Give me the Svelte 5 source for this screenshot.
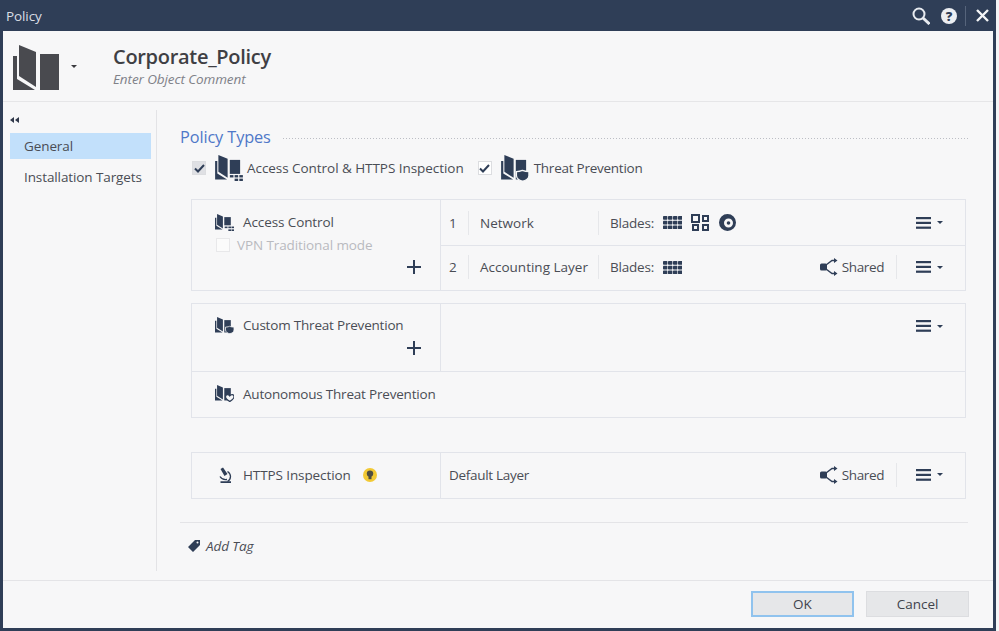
<script>
  const tiles = [0, 1, 2].flatMap((r) => [0, 1, 2, 3].map((c) => ({ x: c * 5, y: r * 4.7 })));
</script>

{#snippet book()}
  <path d="M6 0 23 7V42L6 31Z" />
  <path d="M0 11H4V34L22 45H0Z" />
  <path d="M27 9H46V45H27Z" />
{/snippet}

{#snippet blades()}
  <svg class="ic" width="19" height="13" viewBox="0 0 19 13" aria-hidden="true">
    {#each tiles as t}<rect x={t.x} y={t.y} width="4.400" height="3.700" rx="0.700" />{/each}
  </svg>
{/snippet}

{#snippet share()}
  <svg class="ic" width="18" height="18" viewBox="0 0 18 18" aria-hidden="true">
    <rect x="0" y="5.500" width="7" height="7" rx="1.500" />
    <path class="ln" d="M6 7 12 2.500H15M6 11 12 15.500H15" />
    <path d="M14 0 17.500 2.500 14 5ZM14 13 17.500 15.500 14 18Z" />
  </svg>
{/snippet}

{#snippet menu()}
  <div class="menu">
    <svg class="ic" width="15" height="12" viewBox="0 0 15 12" aria-hidden="true">
      <rect width="15" height="2.200" /><rect y="4.800" width="15" height="2.200" /><rect y="9.600" width="15" height="2.200" />
    </svg>
    <span class="caret"></span>
  </div>
{/snippet}

{#snippet plus()}
  <svg class="ic" width="14" height="14" viewBox="0 0 14 14" aria-hidden="true">
    <rect y="6" width="14" height="2" /><rect x="6" width="2" height="14" />
  </svg>
{/snippet}

<div class="window">
  <header class="title">
    <span class="title-text">Policy</span>
    <div class="title-tools">
      <svg width="18" height="18" viewBox="0 0 18 18" aria-hidden="true">
        <circle cx="7" cy="7" r="5.500" fill="none" stroke="#e8ebf0" stroke-width="2" />
        <path d="M11 11 17.500 17" stroke="#e8ebf0" stroke-width="3" />
      </svg>
      <span class="help">?</span>
      <span class="tool-sep"></span>
      <svg width="13" height="13" viewBox="0 0 13 13" aria-hidden="true">
        <path d="M1 1 12 12M12 1 1 12" stroke="#f4f5f7" stroke-width="2.400" />
      </svg>
    </div>
  </header>

  <div class="object">
    <svg class="big-book" width="47" height="45" viewBox="0 0 47 45" aria-hidden="true">{@render book()}</svg>
    <span class="caret big-caret"></span>
    <div class="object-text">
      <h1>Corporate_Policy</h1>
      <p>Enter Object Comment</p>
    </div>
  </div>

  <div class="body">
    <nav class="side">
      <div class="collapse">
        <svg width="9" height="6" viewBox="0 0 9 6" aria-hidden="true"><path d="M4 0V6L0 3ZM9 0V6L5 3Z" /></svg>
      </div>
      <div class="nav-item active">General</div>
      <div class="nav-item">Installation Targets</div>
    </nav>

    <main class="main">
      <div class="section-head">
        <h2>Policy Types</h2>
        <span class="dots"></span>
      </div>

      <div class="types">
        <span class="check grey"><svg width="11" height="9" viewBox="0 0 11 9" aria-hidden="true"><path d="M1 4.500 4 7.500 10 1" /></svg></span>
        <svg class="type-icon" width="28" height="26" viewBox="0 0 47 44" aria-hidden="true">
          <g transform="scale(.92)">{@render book()}</g>
          <rect x="22" y="32" width="25" height="12" fill="#f7f7f8" />
          <g fill="#2f3e57"><rect x="25" y="34" width="6" height="4" /><rect x="33" y="34" width="6" height="4" /><rect x="41" y="34" width="6" height="4" /><rect x="33" y="40" width="6" height="4" /><rect x="41" y="40" width="6" height="4" /></g>
        </svg>
        <span class="type-label first">Access Control &amp; HTTPS Inspection</span>
        <span class="check"><svg width="11" height="9" viewBox="0 0 11 9" aria-hidden="true"><path d="M1 4.500 4 7.500 10 1" /></svg></span>
        <svg class="type-icon" width="28" height="26" viewBox="0 0 47 44" aria-hidden="true">
          <g transform="scale(.92)">{@render book()}</g>
          <path d="M26 28C31 28 36 26 36 26S41 28 47 28V35C47 40 41 44 36.500 44 32 44 26 40 26 35Z" stroke="#f7f7f8" stroke-width="2" />
        </svg>
        <span class="type-label second">Threat Prevention</span>
      </div>

      <section class="card access">
        <div class="left">
          <div class="left-title">
            <svg class="small-icon" width="19" height="17" viewBox="0 0 47 42" aria-hidden="true">
              <g transform="scale(.85)">{@render book()}</g>
              <rect x="22" y="28" width="25" height="14" fill="#f7f7f8" />
              <g fill="#2f3e57"><rect x="24" y="31" width="7" height="4" /><rect x="33" y="31" width="7" height="4" /><rect x="33" y="38" width="7" height="4" /><rect x="41" y="31" width="6" height="4" /><rect x="41" y="38" width="6" height="4" /></g>
            </svg>
            <span>Access Control</span>
          </div>
          <label class="vpn"><span class="check disabled"></span><span>VPN Traditional mode</span></label>
          <div class="plus">{@render plus()}</div>
        </div>
        <div class="rows">
          <div class="row upper">
            <span class="num">1</span>
            <span class="name">Network</span>
            <span class="blades">Blades:</span>
            {@render blades()}
            <svg class="ic apps" width="18" height="17" viewBox="0 0 18 17" aria-hidden="true">
              <path fill-rule="evenodd" d="M0 0H9V9H0ZM2 2V7H7V2ZM11 1H18V8H11ZM13 3V6H16V3ZM1 10H8V17H1ZM3 12V15H6V12ZM11 10H18V17H11ZM13 12V15H16V12Z" />
            </svg>
            <svg class="ic target" width="17" height="17" viewBox="0 0 17 17" aria-hidden="true">
              <path fill-rule="evenodd" d="M8.500 0A8.500 8.500 0 1 1 8.500 17 8.500 8.500 0 0 1 8.500 0ZM9.500 4.500A4.500 4.500 0 1 0 9.500 13.500 4.500 4.500 0 0 0 9.500 4.500Z" />
              <circle cx="9.500" cy="9" r="1.800" />
            </svg>
            <span class="grow"></span>
            {@render menu()}
          </div>
          <div class="row second-row">
            <span class="num">2</span>
            <span class="name">Accounting Layer</span>
            <span class="blades">Blades:</span>
            {@render blades()}
            <span class="grow"></span>
            <div class="shared">{@render share()}<span>Shared</span></div>
            {@render menu()}
          </div>
        </div>
      </section>

      <section class="card threat">
        <div class="threat-top">
          <div class="left custom">
            <div class="left-title">
              <svg class="small-icon" width="19" height="17" viewBox="0 0 47 42" aria-hidden="true">
                <g transform="scale(.85)">{@render book()}</g>
                <path d="M26 25C31 25 36 23 36 23S41 25 47 25V32C47 37 41 41 36.500 41 32 41 26 37 26 32Z" stroke="#f7f7f8" stroke-width="2" />
              </svg>
              <span>Custom Threat Prevention</span>
            </div>
            <div class="plus">{@render plus()}</div>
          </div>
          <div class="custom-right">{@render menu()}</div>
        </div>
        <div class="left-title auto">
          <svg class="small-icon" width="19" height="17" viewBox="0 0 47 42" aria-hidden="true">
            <g transform="scale(.85)">{@render book()}</g>
            <path d="M26 29C26 23 33 22 36.500 27 40 22 47 23 47 29 47 34 41 38 36.500 41 32 38 26 34 26 29Z" fill="#f7f7f8" stroke="#2f3e57" stroke-width="3" />
          </svg>
          <span>Autonomous Threat Prevention</span>
        </div>
      </section>

      <section class="card https">
        <div class="left-title https-left">
          <svg class="scope" width="14" height="16" viewBox="0 0 14 16" aria-hidden="true">
            <path d="M1.500 2 4 .5 8.500 7 5.500 9ZM1.500 14.200H12V16H1.500Z" />
            <path d="M8.500 4.500C12.500 7 12.500 12 8.500 14.500M1 9.500C2.500 12 5 13 8 12.500" fill="none" stroke="#2f3e57" stroke-width="1.300" />
          </svg>
          <span>HTTPS Inspection</span>
          <svg class="bulb" width="14" height="14" viewBox="0 0 14 14" aria-hidden="true">
            <circle cx="7" cy="7" r="7" fill="#f2c934" />
            <circle cx="7" cy="5.600" r="3.200" fill="#4f4e40" />
            <rect x="5.500" y="8" width="3" height="3.200" fill="#4f4e40" />
          </svg>
        </div>
        <div class="row https-row">
          <span class="layer">Default Layer</span>
          <span class="grow"></span>
          <div class="shared">{@render share()}<span>Shared</span></div>
          {@render menu()}
        </div>
      </section>

      <div class="tag">
        <svg class="ic" width="12" height="12" viewBox="0 0 12 12" aria-hidden="true">
          <path fill-rule="evenodd" d="M0 7 7 0H12V5L5 12ZM9.500 1.500A1 1 0 1 0 9.500 3.500 1 1 0 0 0 9.500 1.500Z" />
        </svg>
        <span>Add Tag</span>
      </div>
    </main>
  </div>

  <footer class="footer">
    <button class="btn ok">OK</button>
    <button class="btn">Cancel</button>
  </footer>
</div>

<style>
  :global(body) {
    margin: 0;
    background: #f4f5f6;
  }
  .window {
    box-sizing: border-box;
    width: 996px;
    height: 631px;
    display: flex;
    flex-direction: column;
    background: #f7f7f8;
    border: solid #2f3e57;
    border-width: 0 3px 3px 3px;
    font-family: "Open Sans", "Noto Sans", sans-serif;
    font-size: 13.5px;
    letter-spacing: -0.1px;
    color: #4a4d55;
  }
  .title {
    height: 31px;
    margin: 0 -3px;
    padding: 0 7px 0 6px;
    flex: none;
    display: flex;
    align-items: center;
    justify-content: space-between;
    background: #2f3e57;
  }
  .title-text {
    color: #d9dde4;
    font-size: 13.5px;
  }
  .title-tools {
    display: flex;
    align-items: center;
  }
  .help {
    width: 16px;
    height: 16px;
    margin-left: 11px;
    border-radius: 50%;
    background: #eceef2;
    color: #2f3e57;
    font-size: 13px;
    font-weight: 800;
    line-height: 16px;
    text-align: center;
  }
  .tool-sep {
    width: 1px;
    height: 20px;
    margin: 0 10px 0 8px;
    background: #56647b;
  }
  .object {
    height: 70px;
    flex: none;
    display: flex;
    align-items: center;
    border-bottom: 1px solid #e6e6e8;
  }
  .big-book {
    margin: 2px 0 0 10px;
    fill: #494a4f;
  }
  .caret {
    width: 0;
    height: 0;
    border: solid transparent;
    border-width: 3.5px 3px 0;
    border-top-color: #2f3e57;
  }
  .big-caret {
    margin-left: 11px;
    border-top-color: #3a3a3e;
  }
  .object-text {
    margin-left: 36px;
  }
  h1 {
    margin: 0;
    font-size: 20px;
    line-height: 26px;
    font-weight: 600;
    letter-spacing: -0.3px;
    color: #3f3f44;
  }
  .object-text p {
    margin: 0;
    font-size: 13.5px;
    line-height: 18px;
    font-style: italic;
    color: #808188;
  }
  .body {
    flex: 1;
    display: flex;
    min-height: 0;
    border-bottom: 1px solid #e4e4e7;
  }
  .side {
    width: 154px;
    flex: none;
    margin: 8px 0 9px;
    box-sizing: border-box;
    border-right: 1px solid #e3e3e6;
    padding: 0 5px 0 7px;
  }
  .collapse {
    height: 23px;
    box-sizing: border-box;
    padding-top: 7px;
    line-height: 0;
    fill: #30384a;
  }
  .nav-item {
    height: 26px;
    line-height: 26px;
    padding-left: 14px;
    margin-bottom: 5px;
  }
  .nav-item.active {
    background: #c2e0fb;
  }
  .main {
    flex: 1;
    min-width: 0;
    padding: 0 27px 0 23px;
  }
  .section-head {
    box-sizing: border-box;
    height: 49px;
    padding: 21px 0 0;
    margin-right: -2px;
    display: flex;
    align-items: center;
    gap: 12px;
  }
  h2 {
    margin: 0;
    font-size: 16.3px;
    font-weight: 400;
    color: #4f78c8;
    white-space: nowrap;
  }
  .dots {
    flex: 1;
    height: 1px;
    margin-top: 3px;
    background: repeating-linear-gradient(90deg, #bcbec5 0 1px, transparent 1px 3px);
  }
  .types {
    height: 26px;
    margin: 4px 0 18px 12px;
    display: flex;
    align-items: center;
  }
  .check {
    box-sizing: border-box;
    width: 14px;
    height: 14px;
    flex: none;
    display: flex;
    align-items: center;
    justify-content: center;
    background: #fff;
    border: 1px solid #dcdde0;
  }
  .check.grey {
    background: #dfe0e4;
  }
  .check.disabled {
    background: #fbfbfb;
    border-color: #e8e8ea;
  }
  .check path {
    fill: none;
    stroke: #2f3e57;
    stroke-width: 2;
  }
  .type-icon {
    margin-left: 9px;
    fill: #2f3e57;
    flex: none;
  }
  .type-label {
    margin-left: 5px;
    white-space: nowrap;
  }
  .type-label.first {
    margin-left: 4px;
    margin-right: 14px;
    letter-spacing: -0.05px;
  }
  .type-label.second {
    letter-spacing: -0.25px;
  }
  .card {
    box-sizing: border-box;
    margin-left: 11px;
    width: 775px;
    border: 1px solid #e2e4ea;
  }
  .access {
    height: 92px;
    display: flex;
    margin-bottom: 12px;
  }
  .left {
    box-sizing: border-box;
    width: 249px;
    flex: none;
    position: relative;
    border-right: 1px solid #e2e4ea;
  }
  .left-title {
    display: flex;
    align-items: center;
    height: 22px;
    padding: 11px 0 0 23px;
  }
  .custom .left-title {
    padding-top: 10px;
    letter-spacing: -0.2px;
  }
  .small-icon {
    fill: #2f3e57;
    margin-right: 9px;
    flex: none;
  }
  .vpn {
    display: flex;
    align-items: center;
    gap: 7px;
    margin: 1px 0 0 24px;
    height: 22px;
    color: #b9babf;
  }
  .plus {
    position: absolute;
    right: 19px;
    bottom: 16px;
    height: 14px;
  }
  .ic {
    fill: #2f3e57;
    flex: none;
  }
  .ln {
    fill: none;
    stroke: #2f3e57;
    stroke-width: 1.4;
  }
  .rows {
    flex: 1;
    display: flex;
    flex-direction: column;
  }
  .row {
    flex: 1;
    display: flex;
    align-items: center;
  }
  .upper {
    padding-top: 1px;
  }
  .second-row {
    padding-bottom: 1px;
    border-top: 1px solid #e2e4ea;
  }
  .https-row {
    padding-bottom: 2px;
  }
  .num {
    box-sizing: border-box;
    width: 28px;
    padding-left: 8px;
    line-height: 24px;
    border-right: 1px solid #e6e7ea;
  }
  .name {
    box-sizing: border-box;
    width: 130px;
    padding-left: 11px;
    line-height: 24px;
    white-space: nowrap;
    letter-spacing: 0;
    border-right: 1px solid #e6e7ea;
  }
  .blades {
    width: 53px;
    padding-left: 11px;
    letter-spacing: -0.2px;
  }
  .apps {
    margin-left: 9px;
  }
  .target {
    margin-left: 10px;
  }
  .grow {
    flex: 1;
  }
  .shared {
    display: flex;
    align-items: center;
    gap: 4px;
    height: 24px;
    padding-right: 12px;
    letter-spacing: -0.4px;
    border-right: 1px solid #e6e7ea;
  }
  .menu {
    width: 68px;
    flex: none;
    box-sizing: border-box;
    padding-left: 19px;
    display: flex;
    align-items: center;
    gap: 6px;
  }
  .threat {
    height: 115px;
    margin-bottom: 34px;
  }
  .threat-top {
    height: 67px;
    display: flex;
    border-bottom: 1px solid #e2e4ea;
  }
  .custom .plus {
    bottom: 16px;
  }
  .custom-right {
    flex: 1;
    padding-top: 16px;
    display: flex;
    justify-content: flex-end;
    align-items: flex-start;
  }
  .auto {
    height: 43px;
    padding: 0 0 3px 23px;
    letter-spacing: -0.2px;
  }
  .https {
    height: 47px;
    display: flex;
    margin-bottom: 23px;
  }
  .https-left {
    box-sizing: border-box;
    width: 249px;
    height: auto;
    padding: 0 0 2px 27px;
    flex: none;
    border-right: 1px solid #e2e4ea;
  }
  .scope {
    fill: #2f3e57;
    margin-right: 10px;
    flex: none;
  }
  .bulb {
    margin-left: 12px;
  }
  .layer {
    padding-left: 8px;
    letter-spacing: -0.3px;
  }
  .tag {
    box-sizing: border-box;
    height: 50px;
    margin-right: -2px;
    padding: 0 0 4px 8px;
    border-top: 1px solid #e4e4e7;
    display: flex;
    align-items: center;
    gap: 6px;
    font-style: italic;
  }
  .footer {
    height: 47px;
    flex: none;
    padding: 10px 24px 0 0;
    box-sizing: border-box;
    display: flex;
    justify-content: flex-end;
    align-items: flex-start;
    gap: 12px;
  }
  .btn {
    box-sizing: border-box;
    width: 103px;
    height: 26px;
    padding: 0;
    border: 1px solid #dcdde0;
    background: #e6e7e9;
    color: #3f434c;
    font: inherit;
  }
  .btn.ok {
    border: 2px solid #90c3ee;
  }
</style>
